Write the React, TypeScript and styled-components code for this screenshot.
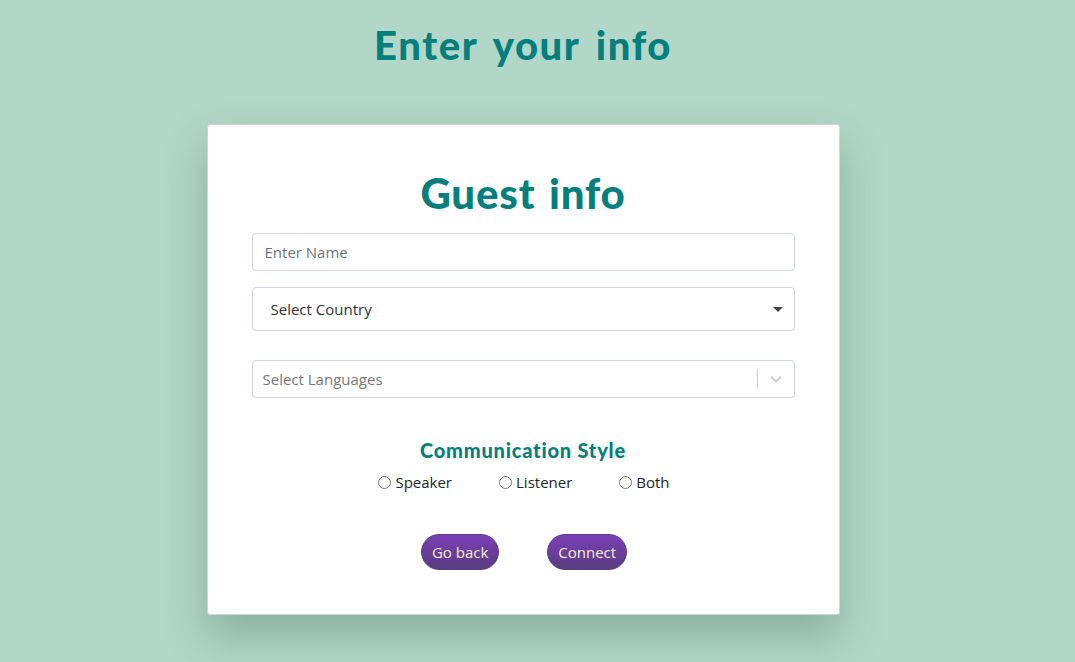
import React from "react";
import styled, { createGlobalStyle } from "styled-components";

const Global = createGlobalStyle`
  html, body { margin: 0; padding: 0; background: #b2d6c8; }
  body { font-family: "Open Sans", "Noto Sans", sans-serif; }
  * { box-sizing: border-box; }
`;

const Page = styled.div`
  width: 1046px;
  min-height: 662px;
  display: flex;
  flex-direction: column;
  align-items: center;
  padding-top: 20px;
`;

const PageTitle = styled.h1`
  margin: 0;
  font-family: "Lato", sans-serif;
  font-weight: 900;
  font-size: 40px;
  line-height: 50px;
  color: #057f7e;
  letter-spacing: 1.6px;
  word-spacing: 5px;
`;

const Card = styled.div`
  margin-top: 54px;
  width: 633px;
  height: 491px;
  background: #fff;
  border: 1px solid #cfd5d3;
  border-radius: 3px;
  box-shadow: 0 22px 40px rgba(60, 110, 90, 0.35);
  display: flex;
  flex-direction: column;
  align-items: center;
  padding: 42px 44px 0;
`;

const CardTitle = styled.h2`
  margin: 0 0 14px;
  font-family: "Lato", sans-serif;
  font-weight: 900;
  font-size: 42px;
  line-height: 52px;
  color: #057f7e;
  letter-spacing: 0.8px;
  word-spacing: 3px;
`;

const Field = styled.div<{ $h: number; $mt: number }>`
  width: 543px;
  height: ${(p) => p.$h}px;
  margin-top: ${(p) => p.$mt}px;
  border: 1px solid #ced4da;
  border-radius: 4px;
  display: flex;
  align-items: center;
  font-size: 15px;
  color: #495057;
  background: #fff;
`;

const Placeholder = styled.span<{ $pl: number; $c: string }>`
  padding-left: ${(p) => p.$pl}px;
  color: ${(p) => p.$c};
  flex: 1;
`;

const Caret = styled.span`
  width: 0;
  height: 0;
  border-left: 5px solid transparent;
  border-right: 5px solid transparent;
  border-top: 5px solid #444;
  margin-right: 11px;
`;

const Separator = styled.span`
  width: 1px;
  height: 20px;
  background: #ccc;
`;

const Chevron = styled.span`
  width: 36px;
  display: flex;
  justify-content: center;
  align-items: center;
`;

const SectionTitle = styled.h3`
  margin: 39px 0 0;
  font-family: "Lato", sans-serif;
  font-weight: 900;
  font-size: 20px;
  line-height: 26px;
  color: #057f7e;
  letter-spacing: 0.8px;
`;

const RadioRow = styled.div`
  display: flex;
  gap: 47px;
  margin-top: 9px;
  margin-left: 2px;
`;

const RadioLabel = styled.label`
  display: flex;
  align-items: center;
  gap: 4px;
  font-size: 15px;
  color: #212529;
`;

const RadioCircle = styled.span`
  width: 13px;
  height: 13px;
  border: 1px solid #767676;
  border-radius: 50%;
  background: #fff;
`;

const ButtonRow = styled.div`
  display: flex;
  gap: 48px;
  margin-top: 42px;
  margin-left: 2px;
`;

const PillButton = styled.button`
  height: 36px;
  padding: 0 10px;
  border: 1px solid #5a3b86;
  border-radius: 18px;
  background: linear-gradient(#7a3fb7, #593d7f);
  color: #fbeed8;
  font-family: "Open Sans", sans-serif;
  font-size: 15px;
  cursor: pointer;
`;

export default function App() {
  return (
    <>
      <Global />
      <Page>
        <PageTitle>Enter your info</PageTitle>
        <Card>
          <CardTitle>Guest info</CardTitle>
          <Field $h={38} $mt={0}>
            <Placeholder $pl={12} $c="#6c757d">Enter Name</Placeholder>
          </Field>
          <Field $h={44} $mt={16}>
            <Placeholder $pl={18} $c="#333">Select Country</Placeholder>
            <Caret />
          </Field>
          <Field $h={38} $mt={29}>
            <Placeholder $pl={10} $c="#777">Select Languages</Placeholder>
            <Separator />
            <Chevron>
              <svg width="14" height="10" viewBox="0 0 14 10">
                <path d="M2 2.5 L7 7.5 L12 2.5" fill="none" stroke="#ccc" strokeWidth="2" />
              </svg>
            </Chevron>
          </Field>
          <SectionTitle>Communication Style</SectionTitle>
          <RadioRow>
            <RadioLabel><RadioCircle />Speaker</RadioLabel>
            <RadioLabel><RadioCircle />Listener</RadioLabel>
            <RadioLabel><RadioCircle />Both</RadioLabel>
          </RadioRow>
          <ButtonRow>
            <PillButton>Go back</PillButton>
            <PillButton>Connect</PillButton>
          </ButtonRow>
        </Card>
      </Page>
    </>
  );
}
